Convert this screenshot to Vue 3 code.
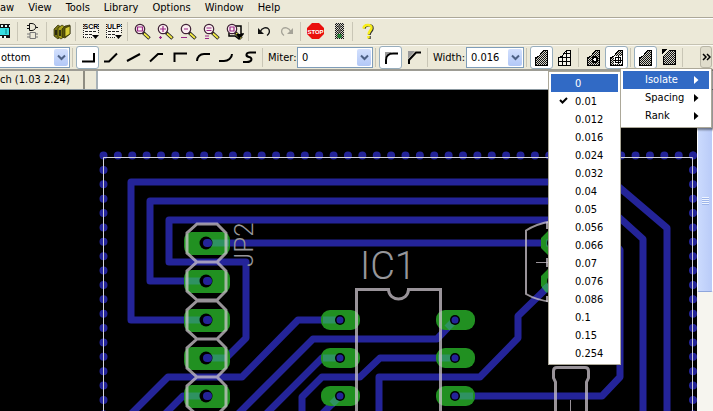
<script setup>
import { ref } from 'vue'

const menus = ['aw', 'View', 'Tools', 'Library', 'Options', 'Window', 'Help']

const mainTools = [
  ['gate'],
  ['books'],
  ['scr', 'ulp'],
  ['zoom-fit', 'zoom-in', 'zoom-out', 'zoom-redraw', 'zoom-select'],
  ['undo', 'redo'],
  ['stop', 'light'],
  ['help'],
]

const bends = [
  'M2 13.5H14V5',
  'M1 13.5H6L14 5.5',
  'M1 13L14 6',
  'M1 13.5L9 6H14',
  'M2.500 14V5.500H15',
  'M2 13C2 9 5 6 9 6H15',
  'M1 13H6C10 13 14 10 14 6',
  'M15 4.500H9C5 4.500 4 8 8 9S11 14 6 14H2',
]
const bend = ref(0)
const miter = ref(0)

const polygonTools = [
  [
    { name: 'Solid', fill: 'dither', on: true },
    { name: 'Hatch', fill: 'hatch' },
  ],
  [
    { name: 'Thermals off', fill: 'dither', mark: 'ring' },
    { name: 'Thermals on', fill: 'dither', mark: 'thermal', on: true },
  ],
  [
    { name: 'Orphans off', fill: 'dither', on: true },
    { name: 'Orphans on', fill: 'dither', mark: 'orphan' },
  ],
]

const overflow = ['Isolate', 'Spacing', 'Rank']
const values = [
  '0', '0.01', '0.012', '0.016', '0.024', '0.032', '0.04', '0.05',
  '0.056', '0.066', '0.07', '0.076', '0.086', '0.1', '0.15', '0.254',
]
const hovered = ref('0')
const isolate = ref('0.01')

const traces = [
  'M206 320H131V182H613L667 228V420',
  'M206 281H150V201H601L643 239V420',
  'M206 358L227 357L246 338V262H169V220H596L620 250V377L602 396H455',
  'M206 243H553',
  'M340 320H298L242 377H168L126 419',
  'M455 320L437 339H313L233 419',
  'M340 358H322L262 418',
  'M455 358H380L360 377H322L302 397V420',
  'M379 420V377H480L518 338V316L553 282',
  'M340 396L317 419',
  'M206 396H183L160 419',
]

const headerPads = [
  { y: 243, lead: 'M208 243H229' },
  { y: 281, lead: 'M204 281H185' },
  { y: 320, lead: 'M204 320H185' },
  { y: 358, lead: 'M208 358H226' },
  { y: 396, lead: 'M204 396H186' },
]
const headerOutline = headerPads
  .map(({ y }) => `M197 ${y - 19}H217L226 ${y - 10}V${y + 10}L217 ${y + 19}H197L187 ${y + 10}V${y - 10}Z`)
  .join('')

const chipPads = [
  { x: 340, y: 320, lead: 'M340 320H323' },
  { x: 340, y: 358, lead: 'M340 358H323' },
  { x: 340, y: 396, lead: 'M340 396L332 404' },
  { x: 455, y: 320, lead: 'M455 320L447 328' },
  { x: 455, y: 358, lead: 'M455 358H438' },
  { x: 455, y: 396, lead: 'M455 396H473' },
]
</script>

<template>
  <div class="window">
    <svg class="defs" width="0" height="0" aria-hidden="true">
      <defs>
        <pattern id="dither" width="2" height="2" patternUnits="userSpaceOnUse">
          <rect width="2" height="2" fill="#d6d4ca" />
          <rect width="1" height="1" fill="#111" />
          <rect x="1" y="1" width="1" height="1" fill="#111" />
        </pattern>
        <pattern id="hatch" x="1" y="1" width="4" height="4" patternUnits="userSpaceOnUse">
          <rect width="4" height="4" fill="#f4f2e8" />
          <path d="M0 .5H4M.5 0V4" stroke="#000" />
        </pattern>
      </defs>
    </svg>

    <nav class="menubar">
      <button v-for="m in menus" :key="m" type="button">{{ m }}</button>
    </nav>

    <div class="toolbar">
      <button type="button" class="tool cut" aria-label="Board">
        <svg width="15" height="18" viewBox="0 0 15 18">
          <rect y="1" width="10" height="14" fill="#111" />
          <path d="M0 5H9V12H0Z" fill="#35dfe2" />
          <path d="M1 3H10M0 14H8" stroke="#e8fbfb" stroke-width="2" stroke-dasharray="2 2" />
          <path d="M6 6V11" stroke="#0a8080" />
        </svg>
      </button>
      <template v-for="(group, g) in mainTools" :key="g">
        <span class="sep"></span>
        <button v-for="t in group" :key="t" type="button" class="tool" :aria-label="t">
          <svg width="18" height="18" viewBox="0 0 18 18">
            <g v-if="t === 'gate'" fill="none">
              <path d="M5.500 .5H8C13 1 13 7 8 7.500H5.500ZM3 2.500H5M3 5.500H5M12 4.500H14" stroke="#111" />
              <path d="M6 9.500H11.500V15.500H6ZM3 11H6M3 14H6M12 11H14M12 14H14" stroke="#777" />
            </g>
            <g v-else-if="t === 'books'" stroke="#2c2a00" stroke-width=".7">
              <path d="M1 6L5 2L8 4V13L5 16L1 13Z" fill="#777316" />
              <path d="M5 5L9 2L12 4V13L8 16L5 14Z" fill="#a7a11c" />
              <path d="M9 6L12 3L17 2V11L12 15L9 14Z" fill="#59560c" />
              <path d="M12 5L17 3V11L12 14Z" fill="#d5cc35" />
              <path d="M3 7V12M7 7V13" stroke="#111" stroke-width="1.500" />
            </g>
            <g v-else-if="t === 'scr' || t === 'ulp'">
              <rect x="1" y="1" width="15" height="14" fill="#f8f6ee" />
              <path d="M1.500 1V15M1 14.500H10M16.500 1V11" stroke="#222" stroke-dasharray="1 1" />
              <text x="9" y="6" class="badge">{{ t.toUpperCase() }}</text>
              <path d="M3 8.500H14M3 11.500H10" stroke="#222" stroke-dasharray="3 1" />
              <path d="M10 12H17L13.500 16Z" />
            </g>
            <g v-else-if="t.startsWith('zoom')">
              <path v-if="t === 'zoom-select'" d="M9 3H15V11H17L13 16L9 13H3V10" fill="none" stroke="#000" stroke-width="1.500" />
              <path d="M9 9.500L15.500 15.500" stroke="#222" stroke-width="3.500" />
              <path d="M10 10.500L15 15" stroke="#f3ea45" stroke-width="1.700" />
              <circle cx="6" cy="6" r="4.700" fill="#faedf0" stroke="#3f2236" stroke-width="1.200" />
              <g fill="none" stroke="#9a2687" stroke-width="1.200">
                <path v-if="t === 'zoom-fit'" d="M3.500 4H8.500V8H3.500Z" />
                <path v-if="t === 'zoom-in'" d="M3 6H9M6 3V9M2 14.500H5M3.500 13V16" />
                <path v-if="t === 'zoom-out'" d="M4 6H8M1 14.500H7" />
                <path v-if="t === 'zoom-redraw'" d="M3.500 5H8.500M3.500 7.500H8.500M2 13H6M2 15.500H6" />
                <path v-if="t === 'zoom-select'" d="M4 4H8V8H4Z" />
              </g>
              <path v-if="t === 'zoom-select'" d="M10 11H17L13.500 16Z" />
            </g>
            <g v-else-if="t === 'undo'" fill="none" stroke="#111" stroke-width="1.300">
              <path d="M5 9C7 4.500 12 3.500 14 6.500C15 9 14 11 12 12.500" />
              <path d="M3 5V11H9Z" fill="#111" stroke="none" />
            </g>
            <g v-else-if="t === 'redo'" fill="none" stroke="#a5a398" stroke-width="1.300">
              <path d="M13 9C11 4.500 6 3.500 4 6.500C3 9 4 11 6 12.500" />
              <path d="M15 5V11H9Z" fill="#a5a398" stroke="none" />
            </g>
            <g v-else-if="t === 'stop'">
              <path d="M5 0H12L17 5V11L12 16H5L0 11V5Z" fill="#ea0f0c" />
              <text x="8.500" y="11" class="badge stop">STOP</text>
            </g>
            <g v-else-if="t === 'light'">
              <rect x="5" y="0" width="9" height="16" fill="url(#dither)" />
              <path d="M8 2H11V5H8ZM8 6.500H11V9.500H8Z" fill="#66665f" />
              <path d="M7.500 11H11.500V15H7.500Z" fill="#237f34" />
            </g>
            <g v-else fill="none">
              <path d="M5.500 5.500C6 1 14 1 13.500 5.500C13 9 10.500 8.500 10.500 12M10.500 13V16" stroke="#333" stroke-width="2.500" />
              <path d="M4.500 5.500C5 1 13 1 12.500 5C12 8 9.500 8.500 9.500 11.500M9.500 13V15.500" stroke="#f8ee18" stroke-width="2.500" />
            </g>
          </svg>
        </button>
      </template>
    </div>

    <div class="toolbar">
      <span class="combo layer">
        <select aria-label="Layer"><option>ottom</option></select>
        <span class="arrow"><svg width="9" height="7" viewBox="0 0 9 7"><path d="M1 1.500L4.500 5L8 1.500" /></svg></span>
      </span>
      <span class="sep"></span>
      <button
        v-for="(d, i) in bends" :key="d" type="button" class="tool" :class="{ on: bend === i }"
        :aria-label="'Wire bend ' + i" @click="bend = i"
      >
        <svg width="16" height="18" viewBox="0 0 16 18"><path :d="d" class="wire" /></svg>
      </button>
      <span class="sep"></span>
      <label class="caption" for="miter">Miter:</label>
      <span class="combo miter">
        <select id="miter"><option>0</option></select>
        <span class="arrow"><svg width="9" height="7" viewBox="0 0 9 7"><path d="M1 1.500L4.500 5L8 1.500" /></svg></span>
      </span>
      <span class="sep"></span>
      <button type="button" class="tool" :class="{ on: miter === 0 }" aria-label="Round miter" @click="miter = 0">
        <svg width="16" height="18" viewBox="0 0 16 18">
          <path d="M2 4H9L2 10Z" fill="#999" /><path d="M3 16V12C3 8 6 5.500 10 5.500H15" class="wire" />
        </svg>
      </button>
      <button type="button" class="tool" :class="{ on: miter === 1 }" aria-label="Straight miter" @click="miter = 1">
        <svg width="16" height="18" viewBox="0 0 16 18">
          <path d="M2 3H9L2 11Z" fill="#999" /><path d="M3 16V12L10 4.500H15" class="wire" />
        </svg>
      </button>
      <span class="sep"></span>
      <label class="caption" for="width">Width:</label>
      <span class="combo width">
        <select id="width"><option>0.016</option></select>
        <span class="arrow"><svg width="9" height="7" viewBox="0 0 9 7"><path d="M1 1.500L4.500 5L8 1.500" /></svg></span>
      </span>
      <template v-for="(group, g) in polygonTools" :key="g">
        <span class="sep"></span>
        <button v-for="p in group" :key="p.name" type="button" class="tool" :class="{ on: p.on }" :aria-label="p.name">
          <svg width="16" height="18" viewBox="0 0 16 18" shape-rendering="crispEdges">
            <path v-if="p.mark === 'orphan'" d="M2.500 8.500L8.500 2.500H14.500V16.500H2.500Z" fill="url(#dither)" stroke="#000" />
            <path v-else d="M1.500 17.500V9.500L4.500 8.500L9.500 2.500H13.500V17.500Z" :fill="'url(#' + p.fill + ')'" stroke="#000" />
            <path v-if="p.mark === 'orphan'" d="M1 1H6L1 6Z" />
            <circle v-if="p.mark === 'ring'" cx="9" cy="11.500" r="2.500" fill="#fff" stroke="#000" stroke-width="2" />
            <g v-if="p.mark === 'thermal'">
              <rect x="5" y="8" width="8" height="8" fill="#fff" />
              <path d="M9 8V16M5 12H13" stroke="#000" />
              <rect x="6.500" y="9.500" width="5" height="5" fill="none" stroke="#000" />
            </g>
          </svg>
        </button>
      </template>
      <span class="sep"></span>
      <button type="button" class="more" aria-label="More">
        <svg width="9" height="8" viewBox="0 0 9 8"><path d="M1 1L4 4L1 7M5 1L8 4L5 7" /></svg>
      </button>
    </div>

    <div class="command">
      <output class="coords">ch (1.03 2.24)</output>
      <span class="grip"></span>
      <input type="text" aria-label="Command" />
    </div>

    <main class="workspace">
      <svg class="board" viewBox="0 90 697 321" preserveAspectRatio="xMinYMin slice" role="img" aria-label="Board layout">
        <path class="dots" d="M103.500 155.500H696M103.500 155.500V420M693 155.500V420" />
        <path d="M103.500 420V157.500H692.500V420" fill="none" stroke="#d2d2dc" />
        <g class="traces"><path v-for="t in traces" :key="t" :d="t" /></g>

        <g v-for="p in headerPads" :key="p.y">
          <rect x="184" :y="p.y - 11" width="46" height="23" rx="8" class="pad" />
          <path :d="p.lead" class="lead" />
          <circle cx="206" :cy="p.y" r="6.500" />
          <rect x="203" :y="p.y - 4" width="9" height="8" rx="4" fill="#242499" />
        </g>
        <path class="silk" :d="headerOutline" />

        <g v-for="p in chipPads" :key="p.x + '-' + p.y">
          <rect :x="p.x - 19" :y="p.y - 10" width="39" height="20" rx="9" class="pad" />
          <path :d="p.lead" class="lead" />
          <circle :cx="p.x" :cy="p.y" r="5" />
          <circle :cx="p.x" :cy="p.y" r="3.500" fill="#242499" />
        </g>
        <path class="silk" d="M356.500 420V289.500H388.500C389 302 408 302 408.500 289.500H440.500V420" />

        <path class="pad" d="M541 238L548 231H560V255H548L541 248ZM541 276L548 269H560V293H548L541 286Z" />
        <path class="lead" d="M546 243H560M544 290L552 283" />
        <circle cx="553" cy="243" r="6" /><circle cx="553" cy="281" r="6" />
        <path class="silk thin" d="M552 221Q536 224 526 230.500V294Q536 300 552 302" />
        <path class="silk hair" d="M536 262.500H552M570.500 400V420" />
        <path class="silk" d="M547.500 222V229M547.500 258V267M547.500 296V302" />

        <path class="silk" d="M555.500 420V382L553.500 378V371Q553.500 367.500 557 367.500H585Q588.500 367.500 588.500 371V378L586.500 382V420" />

        <text x="360" y="279" class="name chip">IC1</text>
        <text transform="translate(253 267) rotate(-90)" class="name header">JP2</text>
      </svg>
      <div class="scrollbar"><div class="thumb"><i></i></div></div>
    </main>

    <ul class="menu overflow" role="menu">
      <li v-for="o in overflow" :key="o">
        <button type="button" role="menuitem" :class="{ hot: o === 'Isolate' }">
          {{ o }}<svg width="5" height="8" viewBox="0 0 5 8"><path d="M0 0L4.500 4L0 8Z" /></svg>
        </button>
      </li>
    </ul>

    <ul class="menu values" role="menu">
      <li v-for="v in values" :key="v">
        <button
          type="button" role="menuitemradio" :aria-checked="v === isolate" :class="{ hot: v === hovered }"
          @mouseenter="hovered = v" @click="isolate = v"
        >
          <span class="tick"><svg v-if="v === isolate" width="9" height="9" viewBox="0 0 9 9"><path d="M1 4L3.500 6.500L8 2" /></svg></span>{{ v }}
        </button>
      </li>
    </ul>
  </div>
</template>

<style>
body {
  background: #000;
}
</style>

<style scoped>
.window {
  position: relative;
  display: flex;
  flex-direction: column;
  min-height: 100vh;
  overflow: hidden;
  color: #000;
  background: #ece9d8;
  font: 11px/14px "DejaVu Sans Condensed", "DejaVu Sans", sans-serif;
}

.defs {
  position: absolute;
}

button,
select,
input {
  margin: 0;
  padding: 0;
  border: 0;
  border-radius: 0;
  background: none;
  color: inherit;
  font: inherit;
}

.menubar {
  display: flex;
  gap: 14px;
  height: 17px;
  border-bottom: 1px solid #aca899;
}

.menubar button {
  height: 16px;
}

.toolbar {
  display: flex;
  align-items: center;
  height: 25px;
  border-top: 1px solid #fff;
  white-space: nowrap;
}

.toolbar + .toolbar {
  height: 24px;
  border-top: 1px solid #c5c2b2;
  box-shadow: inset 0 1px #faf9f2;
}

.tool {
  display: flex;
  flex: none;
  align-items: center;
  justify-content: center;
  box-sizing: border-box;
  width: 23px;
  height: 23px;
}

.tool.cut {
  justify-content: flex-start;
  width: 15px;
}

.tool.on {
  border: 1px solid #98aebd;
  border-radius: 3px;
  background: #fff;
}

.sep {
  flex: none;
  width: 1px;
  height: 19px;
  margin: 0 3px 0 2px;
  background: #c9c6b6;
}

.badge {
  font: bold 7px "Liberation Sans", sans-serif;
  text-anchor: middle;
}

.badge.stop {
  font-size: 6px;
  fill: #fff;
}

.wire {
  fill: none;
  stroke: #000;
  stroke-width: 2;
}

.caption {
  width: 29px;
  padding: 2px 0 0 2px;
}

.caption[for="width"] {
  width: 33px;
}

.combo {
  display: flex;
  flex: none;
  box-sizing: border-box;
  height: 21px;
  padding: 1px;
  border: 1px solid #7f9db9;
  background: #fff;
}

.combo select {
  flex: 1;
  min-width: 0;
  padding: 2px 0 0 3px;
  appearance: none;
}

.combo.layer {
  width: 70px;
  border-left: 0;
}

.combo.layer select {
  padding-left: 0;
}

.combo.miter {
  width: 76px;
}

.combo.width {
  width: 58px;
}

.arrow {
  display: flex;
  align-items: center;
  justify-content: center;
  width: 14px;
  border-radius: 2px;
  background: linear-gradient(#d3e0fd, #b2c8f7);
  pointer-events: none;
}

.arrow path {
  fill: none;
  stroke: #4d6185;
  stroke-width: 2;
}

.more {
  display: flex;
  align-items: center;
  justify-content: center;
  width: 12px;
  height: 22px;
  margin: 0 1px 0 auto;
  border: 1px solid #b9b6a6;
  border-radius: 3px;
  background: #e0ddcc;
}

.more path {
  fill: none;
  stroke: #000;
  stroke-width: 1.500;
}

.command {
  display: flex;
  height: 18px;
  border-top: 2px solid #9d9c94;
  border-bottom: 1px solid #8b98a0;
}

.coords {
  width: 83px;
  padding-top: 2px;
}

.grip {
  width: 11px;
  border-left: 2px solid #8f8d82;
  border-right: 2px solid #a8b2b8;
}

.command input {
  flex: 1;
  padding: 0 4px;
  background: #fff;
}

.workspace {
  display: flex;
  flex: 1;
  background: #000;
}

.board {
  flex: 1;
  min-width: 0;
  height: calc(100vh - 90px);
}

.dots {
  fill: none;
  stroke: #242499;
  stroke-width: 8;
  stroke-linecap: round;
  stroke-dasharray: 0 14.380;
}

.traces {
  fill: none;
  stroke: #242499;
  stroke-width: 7;
  stroke-linejoin: round;
}

.pad {
  fill: #219021;
}

.lead {
  fill: none;
  stroke: #2f9262;
  stroke-width: 7;
}

.silk {
  fill: none;
  stroke: #ccc4cc;
  stroke-opacity: 0.75;
  stroke-width: 3;
}

.silk.thin {
  stroke-width: 2;
}

.silk.hair {
  stroke-width: 1;
}

.name {
  fill: #96969a;
  font-family: Roboto, "Liberation Sans", sans-serif;
  font-weight: 300;
}

.name.chip {
  font-size: 38px;
}

.name.header {
  font-size: 26px;
}

.scrollbar {
  width: 16px;
  background: #f6f5ef;
}

.thumb {
  display: flex;
  align-items: center;
  justify-content: center;
  box-sizing: border-box;
  height: 63%;
  border: 1px solid #fff;
  border-bottom-color: #8fa6dc;
  border-radius: 2px;
  background: linear-gradient(90deg, #cbdafd, #b9cbf8);
}

.thumb i {
  width: 7px;
  height: 8px;
  margin-top: 20px;
  background: repeating-linear-gradient(#eef4fe 0 1px, #9db5ea 1px 2px);
}

.menu {
  position: absolute;
  box-sizing: border-box;
  margin: 0;
  padding: 2px;
  border: 1px solid #aca899;
  background: #fff;
  list-style: none;
}

.menu button {
  display: flex;
  align-items: center;
  box-sizing: border-box;
  width: 100%;
  height: 18px;
  padding-top: 2px;
  text-align: left;
}

.menu .hot {
  background: #316ac5;
  color: #fff;
}

.overflow {
  top: 68px;
  right: 1px;
  width: 92px;
  box-shadow: 2px 2px 2px rgba(0, 0, 0, 0.45);
}

.overflow button {
  justify-content: space-between;
  padding: 0 10px 0 22px;
}

.overflow svg {
  fill: currentColor;
}

.values {
  top: 71px;
  right: 92px;
  width: 73px;
}

.tick {
  width: 16px;
  padding-left: 8px;
}

.tick path {
  fill: none;
  stroke: #000;
  stroke-width: 2;
}
</style>
